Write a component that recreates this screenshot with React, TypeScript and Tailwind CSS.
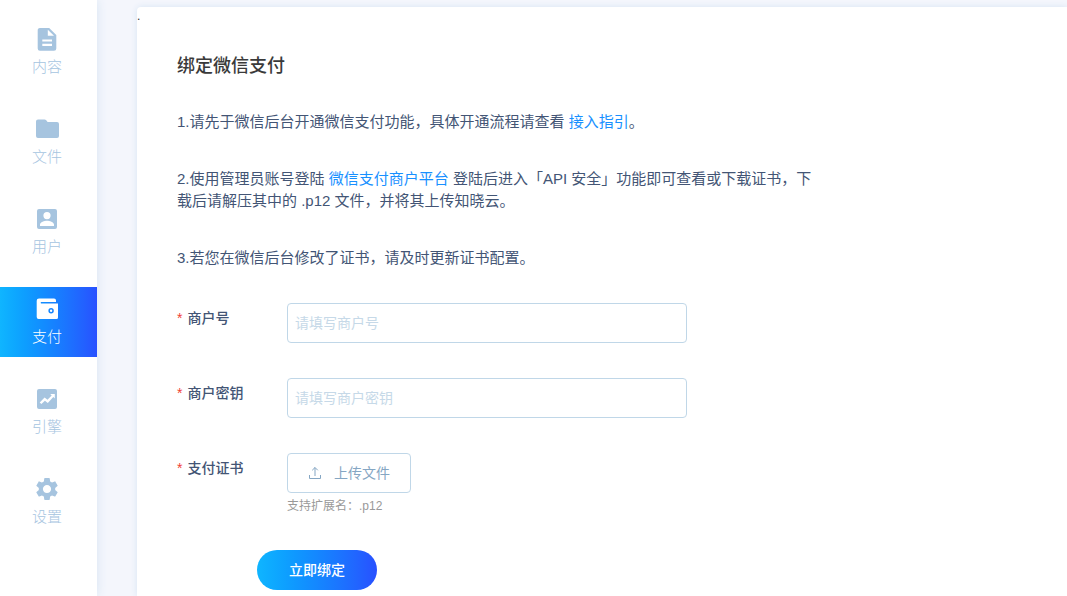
import { useState } from 'react';
import type { InputHTMLAttributes, ReactNode } from 'react';
import clsx from 'clsx';

const navItems = [
  {
    key: 'content',
    label: '内容',
    icon: (
      <path
        fillRule="evenodd"
        d="M5 1h9.2L21.3 8v13.5a2.3 2.3 0 0 1-2.3 2.3H5a2.3 2.3 0 0 1-2.3-2.3v-18A2.3 2.3 0 0 1 5 1zm7.8 1.7v6.1H19zM7.3 12.4v2.2H17v-2.2zM7.3 16.8V19H17v-2.2z"
      />
    ),
  },
  {
    key: 'file',
    label: '文件',
    icon: (
      <path d="M3 2.5h6.6a2 2 0 0 1 1.4.6L12.6 5H22a2 2 0 0 1 2 2v12a2 2 0 0 1-2 2H3a2 2 0 0 1-2-2V4.5a2 2 0 0 1 2-2z" />
    ),
  },
  {
    key: 'user',
    label: '用户',
    icon: (
      <path
        fillRule="evenodd"
        d="M4 2h16a2 2 0 0 1 2 2v16a2 2 0 0 1-2 2H4a2 2 0 0 1-2-2V4a2 2 0 0 1 2-2zm8 3a3.6 3.6 0 1 0 0 7.200A3.6 3.6 0 0 0 12 5zm-7 12.500V19h14v-1.500c0-2.500-4.500-3.800-7-3.800s-7 1.300-7 3.800z"
      />
    ),
  },
  {
    key: 'pay',
    label: '支付',
    icon: (
      <path
        fillRule="evenodd"
        d="M4 1.500h15a2 2 0 0 1 2 2V5H6.200a.8.8 0 0 0 0 1.500H23V20.500a1.500 1.500 0 0 1-1.500 1.500H3.700a2 2 0 0 1-2-2V3.800A2.300 2.300 0 0 1 4 1.500zm12.100 9.500a2.700 2.700 0 1 0 0 5.400 2.700 2.700 0 0 0 0-5.400zm0 1.500a1.200 1.200 0 1 1 0 2.400 1.200 1.200 0 0 1 0-2.400z"
      />
    ),
  },
  {
    key: 'engine',
    label: '引擎',
    icon: (
      <path
        fillRule="evenodd"
        d="M4 2h16a2 2 0 0 1 2 2v16a2 2 0 0 1-2 2H4a2 2 0 0 1-2-2V4a2 2 0 0 1 2-2zm11.200 5l1.500 1.500-4.200 4.200-2.900-2.200L4.700 15.400l1.700 1.700 3.500-3.400 2.900 2.300 5.500-5.900L19.800 11.600V7z"
      />
    ),
  },
  {
    key: 'setting',
    label: '设置',
    viewBox: '1.5 1.5 21 21',
    icon: (
      <path d="M19.140 12.940c.04-.3.060-.61.060-.94 0-.32-.02-.64-.07-.94l2.030-1.580c.18-.14.23-.41.12-.61l-1.920-3.320c-.12-.22-.37-.29-.59-.22l-2.390.96c-.5-.38-1.030-.7-1.620-.94l-.36-2.540c-.04-.24-.24-.41-.48-.41h-3.840c-.24 0-.43.17-.47.41l-.36 2.540c-.59.24-1.130.57-1.620.94l-2.390-.96c-.22-.08-.47 0-.59.22L2.740 8.870c-.12.21-.08.47.12.61l2.030 1.580c-.05.3-.09.63-.09.94s.02.64.07.94l-2.030 1.580c-.18.14-.23.41-.12.61l1.920 3.320c.12.22.37.29.59.22l2.390-.96c.5.38 1.030.7 1.620.94l.36 2.540c.05.24.24.41.48.41h3.840c.24 0 .44-.17.47-.41l.36-2.540c.59-.24 1.130-.56 1.620-.94l2.390.96c.22.08.47 0 .59-.22l1.920-3.320c.12-.22.07-.47-.12-.61l-2.010-1.580zM12 15.600c-1.980 0-3.600-1.620-3.600-3.600s1.620-3.600 3.600-3.600 3.600 1.620 3.600 3.600-1.620 3.600-3.600 3.600z" />
    ),
  },
];

function Sidebar() {
  const [active, setActive] = useState('pay');

  return (
    <nav className="z-10 flex w-[97px] shrink-0 flex-col gap-5 bg-white pt-[17px] shadow-[0_0_10px_#d6e4f3]">
      {navItems.map((item) => (
        <a
          key={item.key}
          href={`#${item.key}`}
          onClick={() => setActive(item.key)}
          className={clsx(
            'flex h-[70px] flex-col items-center gap-1.5 pt-2.5 pr-[3px] text-[15px] leading-5 font-light',
            active === item.key ? 'bg-linear-to-r from-[#10b5ff] to-[#2850ff] text-white' : 'text-[#a6c4df]'
          )}
        >
          <svg className="h-6 w-6" viewBox={item.viewBox || '0 0 24 24'} fill="currentColor" aria-hidden="true">
            {item.icon}
          </svg>
          <span>{item.label}</span>
        </a>
      ))}
    </nav>
  );
}

function FormRow({ id, label, children }: { id: string; label: string; children: ReactNode }) {
  return (
    <div className="flex items-start">
      <label htmlFor={id} className="flex w-[110px] shrink-0 gap-[5px] text-sm leading-[30px] font-medium text-[#435575]">
        <span className="font-normal text-[#f04134]">*</span>
        {label}
      </label>
      {children}
    </div>
  );
}

function TextInput(props: InputHTMLAttributes<HTMLInputElement>) {
  return (
    <input
      {...props}
      className="h-10 w-full max-w-[400px] rounded border border-[#c0d7e8] bg-white px-[7px] text-sm text-[#435575] outline-none placeholder:text-[#c6d9e8] focus:border-[#1890ff]"
    />
  );
}

function UploadIcon() {
  return (
    <svg className="h-3.5 w-3.5" viewBox="0 0 14 14" fill="none" stroke="currentColor" aria-hidden="true">
      <path d="M1.500 9v3.500h11V9M7 10V1.500M4.200 4.300L7 1.500l2.800 2.800" />
    </svg>
  );
}

export default function App() {
  const [mchId, setMchId] = useState('');
  const [mchKey, setMchKey] = useState('');

  return (
    <div className="flex min-h-screen bg-[#f4f6fc] font-['Liberation_Sans','Noto_Sans_CJK_SC',sans-serif]">
      <Sidebar />
      <main className="flex min-w-0 flex-1 pt-[7px] pl-10">
        <section className="flex-1 rounded-tl bg-white shadow-[0_0_6px_#d6e4f3]">
          <div className="text-xs leading-[18px] text-[#333]">.</div>
          <div className="px-10 pt-[27px] pb-1.5">
            <h1 className="text-lg leading-7 font-medium text-[#3a3a3a]">绑定微信支付</h1>

            <div className="mt-[31px] flex max-w-[640px] flex-col gap-[35px] text-[15px] leading-[22px] text-[#435575]">
              <p>
                1.请先于微信后台开通微信支付功能，具体开通流程请查看{' '}
                <a href="#guide" className="text-[#1890ff]">接入指引</a>。
              </p>
              <p>
                2.使用管理员账号登陆{' '}
                <a href="#merchant" className="text-[#1890ff]">微信支付商户平台</a>{' '}
                登陆后进入「API 安全」功能即可查看或下载证书，下载后请解压其中的 .p12 文件，并将其上传知晓云。
              </p>
              <p>3.若您在微信后台修改了证书，请及时更新证书配置。</p>
            </div>

            <form className="mt-[34px] flex flex-col gap-[35px]" onSubmit={(e) => e.preventDefault()}>
              <FormRow id="mch-id" label="商户号">
                <TextInput id="mch-id" placeholder="请填写商户号" value={mchId} onChange={(e) => setMchId(e.target.value)} />
              </FormRow>
              <FormRow id="mch-key" label="商户密钥">
                <TextInput id="mch-key" placeholder="请填写商户密钥" value={mchKey} onChange={(e) => setMchKey(e.target.value)} />
              </FormRow>
              <FormRow id="cert" label="支付证书">
                <div className="flex flex-col gap-1">
                  <button
                    id="cert"
                    type="button"
                    className="flex h-10 w-[124px] items-center gap-3 rounded border border-[#c0d7e8] pl-5 text-sm text-[#85a6c3]"
                  >
                    <UploadIcon />
                    上传文件
                  </button>
                  <span className="text-xs leading-[18px] text-[#999]">支持扩展名：.p12</span>
                </div>
              </FormRow>
              <button
                type="submit"
                className="ml-20 h-10 w-[120px] rounded-full bg-linear-to-r from-[#10b5ff] to-[#2850ff] text-sm font-medium text-white"
              >
                立即绑定
              </button>
            </form>
          </div>
        </section>
      </main>
    </div>
  );
}
